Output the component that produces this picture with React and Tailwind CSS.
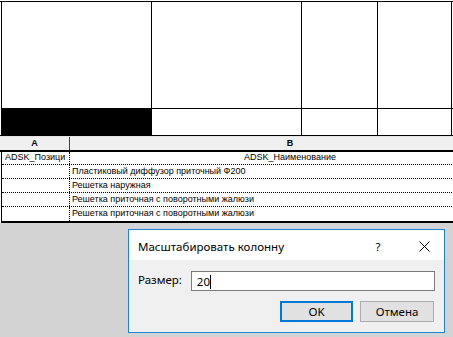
import React from "react";

const rows = [
  { a: "ADSK_Позици", b: "ADSK_Наименование", head: true },
  { a: "", b: "Пластиковый диффузор приточный Ф200" },
  { a: "", b: "Решетка наружная" },
  { a: "", b: "Решетка приточная с поворотными жалюзи" },
  { a: "", b: "Решетка приточная с поворотными жалюзи" },
];

function TopCell({ width, black }) {
  return (
    <div className={`${width} flex flex-col border-r border-black`}>
      <div className="h-[107px] border-b border-black" />
      <div className={`flex-1 ${black ? "bg-black" : ""}`} />
    </div>
  );
}

function Dialog() {
  return (
    <div className="absolute left-[128px] top-[229px] w-[317px] h-[104px] border border-[#1883d7] bg-[#f0f0f0] flex flex-col font-['Noto_Sans',sans-serif] text-[11.5px] text-black">
      <div className="h-[30px] bg-white flex items-center pl-[9px] pr-[14px] pt-[3px]">
        <span className="flex-1">Масштабировать колонну</span>
        <span className="w-[10px] text-center mr-[36px]">?</span>
        <svg width="11" height="11" viewBox="0 0 11 11">
          <path d="M0.5 0.5 L10.5 10.5 M10.5 0.5 L0.5 10.5" stroke="#000" strokeWidth="1" />
        </svg>
      </div>
      <div className="flex-1 flex flex-col pl-[9px] pr-[9px] pt-[11px]">
        <div className="flex items-center">
          <span className="w-[53px] pb-[2px]">Размер:</span>
          <div className="w-[245px] h-[20px] bg-white border border-[#7a7a7a] flex items-center pl-[5px] pt-[2px]">
            <span>20</span>
            <span className="w-px h-[14px] bg-black" />
          </div>
        </div>
        <div className="flex justify-end gap-[7px] mt-[10px] pr-[1px]">
          <button className="w-[73px] h-[21px] bg-[#e1e1e1] border-2 border-[#0078d7] flex items-center justify-center leading-none">
            OK
          </button>
          <button className="w-[74px] h-[21px] bg-[#e1e1e1] border border-[#adadad] flex items-center justify-center leading-none">
            Отмена
          </button>
        </div>
      </div>
    </div>
  );
}

export default function App() {
  return (
    <div className="relative w-[453px] h-[337px] overflow-hidden bg-[#d3d3d3] font-['Liberation_Sans',sans-serif]">
      <div className="bg-white pt-[1px] h-[136px]">
        <div className="flex h-[135px] border-t border-b border-black pl-[1px]">
          <div className="flex border-l border-black">
            <TopCell width="w-[150px]" black />
            <TopCell width="w-[150px]" />
            <TopCell width="w-[76px]" />
            <TopCell width="w-[74px]" />
          </div>
          <div className="w-[4px] flex flex-col">
            <div className="h-[107px] border-b border-black" />
          </div>
        </div>
      </div>

      <div className="w-[520px] bg-white">
        <div className="flex h-[14px] bg-[#f0f0f0] text-[9px] font-bold text-black border-t border-[#e4e4e4]">
          <div className="w-[70px] border-r border-[#404040] flex items-center justify-center">A</div>
          <div className="w-[440px] flex items-center justify-center">B</div>
        </div>
        <div className="h-[2px] bg-black" />
        <div className="border-l border-black ml-[1px] border-b-2 border-b-black text-[9px] text-black">
          {rows.map((r, i) => (
            <div
              key={i}
              className={`flex ${i === 0 ? "h-[13px]" : "h-[14px]"} ${i < rows.length - 1 ? "border-b border-dotted border-b-black" : ""}`}
            >
              <div className="w-[68px] border-r border-dotted border-r-black flex items-center pl-[3px] whitespace-nowrap overflow-hidden">
                {r.a}
              </div>
              <div
                className={`w-[440px] flex items-center whitespace-nowrap ${r.head ? "justify-center" : "pl-[2px]"}`}
              >
                {r.b}
              </div>
            </div>
          ))}
        </div>
      </div>

      <Dialog />
    </div>
  );
}
